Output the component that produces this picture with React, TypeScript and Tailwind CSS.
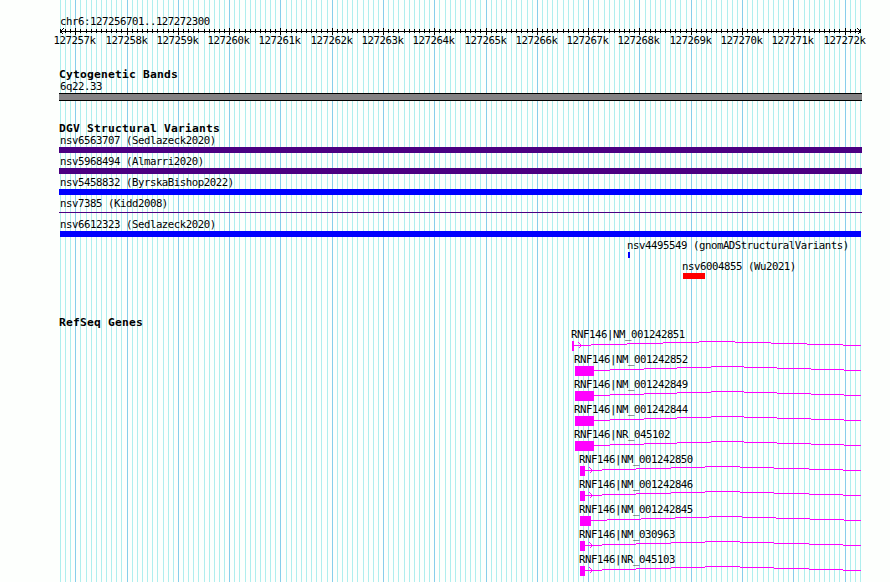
import React from "react";

const px = (bp: number) => 60 + (bp - 127256701) * (800 / 15600);
const TICKS = Array.from({ length: 157 }, (_, i) => {
  const bp = 127256700 + i * 100;
  return { bp, x: Math.round(px(bp)), major: bp % 1000 === 0 };
});

function Label({ children, className = "" }: { children: React.ReactNode; className?: string }) {
  return (
    <div className={`h-[13px] font-['DejaVu_Sans_Mono',monospace] text-[10.7px] leading-[13px] tracking-[-0.442px] whitespace-pre text-black ${className}`}>
      {children}
    </div>
  );
}

function Heading({ children, className = "" }: { children: React.ReactNode; className?: string }) {
  return (
    <h2 className={`h-3 pl-[59px] font-['DejaVu_Sans_Mono',monospace] text-[11.3px] leading-[14px] font-bold tracking-[0.197px] whitespace-pre text-black ${className}`}>
      {children}
    </h2>
  );
}

function Grid() {
  return (
    <svg className="absolute inset-0" width="890" height="582" shapeRendering="crispEdges">
      {TICKS.map((t) => (
        <rect key={t.bp} x={t.x} y="0" width="1" height="582" fill={t.major ? "#87ceeb" : "#afeeee"} />
      ))}
    </svg>
  );
}

function Ruler() {
  return (
    <svg className="block" width="890" height="22" shapeRendering="crispEdges">
      <rect x="60" y="4" width="801" height="1" />
      {TICKS.map((t) => (
        <rect key={t.bp} x={t.x} y={t.major ? 1 : 2} width="1" height={t.major ? 7 : 4} />
      ))}
      <path d="M63.5 1.5 60.5 4.5 63.5 7.5M857.5 1.5 860.5 4.5 857.5 7.5" fill="none" stroke="#000" />
      <g className="font-['DejaVu_Sans_Mono',monospace] text-[10.7px] tracking-[-0.442px]">
        {TICKS.filter((t) => t.major).map((t) => (
          <text key={t.bp} x={t.x - 21.5} y="17">{t.bp / 1000}k</text>
        ))}
      </g>
    </svg>
  );
}

const VARIANTS = [
  { name: "nsv6563707 (Sedlazeck2020)", pad: "pl-[60px]", bar: "ml-[59px] w-[803px] h-1.5 bg-[#4b0082]" },
  { name: "nsv5968494 (Almarri2020)", pad: "pl-[60px]", bar: "ml-[59px] w-[803px] h-1.5 bg-[#4b0082]" },
  { name: "nsv5458832 (ByrskaBishop2022)", pad: "pl-[60px]", bar: "ml-[59px] w-[803px] h-1.5 bg-[#0000ff]" },
  { name: "nsv7385 (Kidd2008)", pad: "pl-[60px]", bar: "ml-[59px] mt-0.5 w-[803px] h-px bg-[#4b0082]" },
  { name: "nsv6612323 (Sedlazeck2020)", pad: "pl-[60px]", bar: "ml-[60px] w-[801px] h-1.5 bg-[#0000ff]" },
  { name: "nsv4495549 (gnomADStructuralVariants)", pad: "pl-[627px]", bar: "ml-[628px] w-0.5 h-1.5 bg-[#0000ff]" },
  { name: "nsv6004855 (Wu2021)", pad: "pl-[682px]", bar: "ml-[683px] w-[22px] h-1.5 bg-[#ff0000]" },
];

type Gene = { name: string; start: number; end: number; steps: number[]; arrow?: boolean };
const A = [591, 627, 663, 699, 735, 771, 807, 843];
const B = [610, 644, 677, 711, 744, 777, 811, 844];
const C = [602, 636, 671, 705, 740, 774, 809, 843];
const D = [607, 641, 675, 709, 742, 776, 810, 844];
const GENES: Gene[] = [
  { name: "RNF146|NM_001242851", start: 572, end: 574, steps: A, arrow: true },
  { name: "RNF146|NM_001242852", start: 575, end: 594, steps: B },
  { name: "RNF146|NM_001242849", start: 575, end: 594, steps: B },
  { name: "RNF146|NM_001242844", start: 575, end: 594, steps: B },
  { name: "RNF146|NR_045102", start: 575, end: 594, steps: B },
  { name: "RNF146|NM_001242850", start: 580, end: 585, steps: C, arrow: true },
  { name: "RNF146|NM_001242846", start: 580, end: 585, steps: C, arrow: true },
  { name: "RNF146|NM_001242845", start: 580, end: 591, steps: D },
  { name: "RNF146|NM_030963", start: 580, end: 585, steps: C, arrow: true },
  { name: "RNF146|NR_045103", start: 580, end: 585, steps: C, arrow: true },
];

function GeneRow({ gene }: { gene: Gene }) {
  const edges = [gene.end, ...gene.steps, 861];
  return (
    <div className="h-[25px]">
      <div style={{ paddingLeft: gene.start - 1 }}>
        <Label>{gene.name}</Label>
      </div>
      <svg className="block" width="890" height="12" shapeRendering="crispEdges" fill="#ff00ff">
        <rect x={gene.start} y="0" width={gene.end - gene.start} height="10" />
        {edges.slice(0, -1).map((x, i) => (
          <rect key={x} x={x} y={Math.abs(i - 4)} width={edges[i + 1] - x} height="1" />
        ))}
        {gene.arrow && (
          <path d={`M${gene.end + 4.5} 1.5l3 3-3 3`} fill="none" stroke="#ff00ff" />
        )}
      </svg>
    </div>
  );
}

export default function App() {
  return (
    <main className="relative h-[582px] w-[890px] overflow-hidden bg-[#fdfffd]">
      <Grid />
      <div className="relative flex flex-col pt-[15px]">
        <Label className="-mb-px pl-[60px]">chr6:127256701..127272300</Label>
        <Ruler />
        <Heading className="mt-[19px]">Cytogenetic Bands</Heading>
        <Label className="pl-[60px]">6q22.33</Label>
        <div className="ml-[59px] h-2 w-[803px] border-y border-black bg-[#848284]" />
        <Heading className="mt-[21px]">DGV Structural Variants</Heading>
        {VARIANTS.map((v) => (
          <div key={v.name} className="h-[21px]">
            <Label className={v.pad}>{v.name}</Label>
            <div className={v.bar} />
          </div>
        ))}
        <Heading className="mt-[35px]">RefSeq Genes</Heading>
        {GENES.map((g) => (
          <GeneRow key={g.name} gene={g} />
        ))}
      </div>
    </main>
  );
}
